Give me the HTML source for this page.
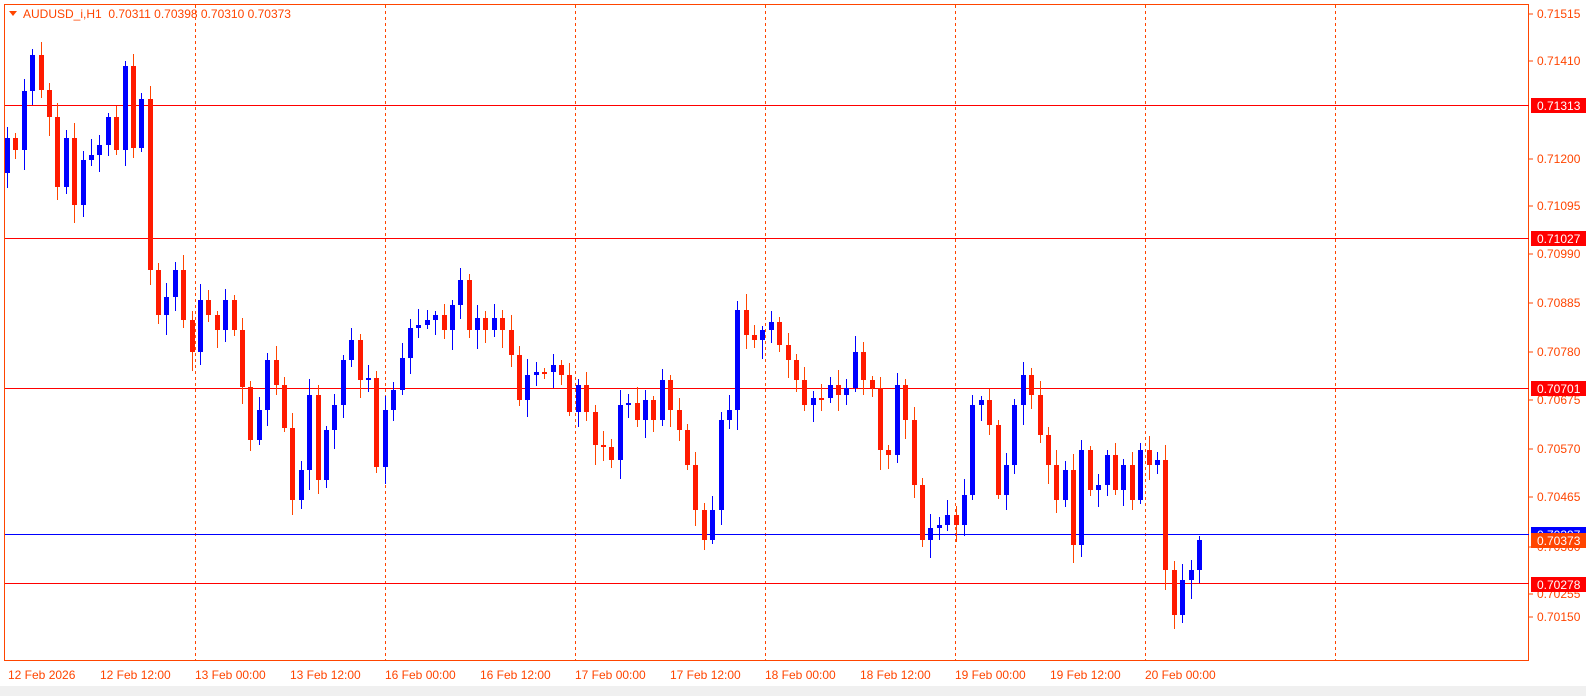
<!DOCTYPE html>
<html><head><meta charset="utf-8"><style>
body{margin:0;background:#fff;width:1586px;height:696px;overflow:hidden;font-family:"Liberation Sans",sans-serif}
svg{position:absolute;left:0;top:0}
</style></head><body>
<svg id="s" width="1586" height="696" xmlns="http://www.w3.org/2000/svg" font-family="Liberation Sans, sans-serif" font-size="12">
<rect x="0" y="0" width="1586" height="696" fill="#fff"/>
<rect x="0" y="686" width="1586" height="10" fill="#f0f0f0"/>
<rect x="4.5" y="4.5" width="1524" height="656" fill="none" stroke="#ff4500" stroke-width="1"/>
<g stroke="#ff4500" stroke-dasharray="3,3" stroke-width="1">
<line x1="195.5" y1="5" x2="195.5" y2="660"/><line x1="385.5" y1="5" x2="385.5" y2="660"/><line x1="575.5" y1="5" x2="575.5" y2="660"/><line x1="765.5" y1="5" x2="765.5" y2="660"/><line x1="955.5" y1="5" x2="955.5" y2="660"/><line x1="1145.5" y1="5" x2="1145.5" y2="660"/><line x1="1335.5" y1="5" x2="1335.5" y2="660"/>
</g>
<g stroke="#ff0000" stroke-width="1">
<line x1="5" y1="105.5" x2="1529" y2="105.5"/><line x1="5" y1="238.5" x2="1529" y2="238.5"/><line x1="5" y1="388.5" x2="1529" y2="388.5"/><line x1="5" y1="583.5" x2="1529" y2="583.5"/>
</g>
<line x1="5" y1="534.5" x2="1529" y2="534.5" stroke="#0000ff"/>
<g id="c"></g>
<g fill="#ff4500">
<text x="1537" y="18">0.71515</text><text x="1537" y="65">0.71410</text><text x="1537" y="163">0.71200</text><text x="1537" y="210">0.71095</text><text x="1537" y="258">0.70990</text><text x="1537" y="307">0.70885</text><text x="1537" y="356">0.70780</text><text x="1537" y="404">0.70675</text><text x="1537" y="453">0.70570</text><text x="1537" y="501">0.70465</text><text x="1537" y="551">0.70360</text><text x="1537" y="598">0.70255</text><text x="1537" y="621">0.70150</text>
</g>
<g stroke="#ff4500"><line x1="1529" y1="14" x2="1533" y2="14"/><line x1="1529" y1="61" x2="1533" y2="61"/><line x1="1529" y1="159" x2="1533" y2="159"/><line x1="1529" y1="206" x2="1533" y2="206"/><line x1="1529" y1="254" x2="1533" y2="254"/><line x1="1529" y1="303" x2="1533" y2="303"/><line x1="1529" y1="352" x2="1533" y2="352"/><line x1="1529" y1="400" x2="1533" y2="400"/><line x1="1529" y1="449" x2="1533" y2="449"/><line x1="1529" y1="497" x2="1533" y2="497"/><line x1="1529" y1="547" x2="1533" y2="547"/><line x1="1529" y1="594" x2="1533" y2="594"/><line x1="1529" y1="617" x2="1533" y2="617"/></g>
<rect x="1531" y="98" width="55" height="15" fill="#ff0000"/><text x="1537" y="110" fill="#fff">0.71313</text>
<rect x="1531" y="231" width="55" height="15" fill="#ff0000"/><text x="1537" y="243" fill="#fff">0.71027</text>
<rect x="1531" y="381" width="55" height="15" fill="#ff0000"/><text x="1537" y="393" fill="#fff">0.70701</text>
<rect x="1531" y="527" width="55" height="14" fill="#0000ff"/><text x="1537" y="539" fill="#fff">0.70397</text>
<rect x="1531" y="533" width="55" height="15" fill="#ff4500"/><text x="1537" y="545" fill="#fff">0.70373</text>
<rect x="1531" y="577" width="55" height="15" fill="#ff0000"/><text x="1537" y="589" fill="#fff">0.70278</text>
<g fill="#ff4500">
<text x="8" y="679">12 Feb 2026</text><text x="100" y="679">12 Feb 12:00</text><text x="195" y="679">13 Feb 00:00</text><text x="290" y="679">13 Feb 12:00</text><text x="385" y="679">16 Feb 00:00</text><text x="480" y="679">16 Feb 12:00</text><text x="575" y="679">17 Feb 00:00</text><text x="670" y="679">17 Feb 12:00</text><text x="765" y="679">18 Feb 00:00</text><text x="860" y="679">18 Feb 12:00</text><text x="955" y="679">19 Feb 00:00</text><text x="1050" y="679">19 Feb 12:00</text><text x="1145" y="679">20 Feb 00:00</text>
</g>
<path d="M9 11 L17 11 L13 16 Z" fill="#ff4500"/>
<text x="23" y="18" fill="#ff4500">AUDUSD_i,H1&#160;&#160;0.70311 0.70398 0.70310 0.70373</text>
</svg>
<script>
var C=[173,138,150,91,55,90,117,187,138,205,160,155,145,117,150,66,148,99,270,315,297,270,320,352,300,315,330,300,330,387,440,410,360,385,428,500,470,395,480,430,405,360,340,380,378,467,410,390,358,328,325,320,315,330,305,280,330,318,330,318,330,355,400,375,372,372,365,375,412,385,412,445,447,460,405,403,420,400,420,380,410,430,465,510,540,510,420,410,310,335,340,330,322,345,360,380,405,398,398,385,395,388,352,380,388,450,455,385,420,485,540,528,525,515,525,495,405,400,425,495,465,405,375,395,435,465,500,470,545,450,490,485,455,490,465,500,450,465,460,570,615,580,570,540];
var g=document.getElementById('c'),h='',n=C.length-1,sp=(1199-7)/(n-1);
for(var i=1;i<=n;i++){var o=C[i-1],c=C[i],x=Math.round(7+(i-1)*sp);var t=Math.min(o,c),b=Math.max(o,c);if(b-t<2)b=t+2;
var hw=4+((i*7)%13),lw=4+((i*11)%17);var col=c<o?'#0000ff':'#ff1a00';var wc=c<o?'#0000ff':'#ff4500';
h+='<line x1="'+(x+.5)+'" y1="'+(t-hw)+'" x2="'+(x+.5)+'" y2="'+(b+lw)+'" stroke="'+wc+'"/>';
h+='<rect x="'+(x-2)+'" y="'+t+'" width="5" height="'+(b-t)+'" fill="'+col+'"/>';}
g.innerHTML=h;
</script>
</body></html>
